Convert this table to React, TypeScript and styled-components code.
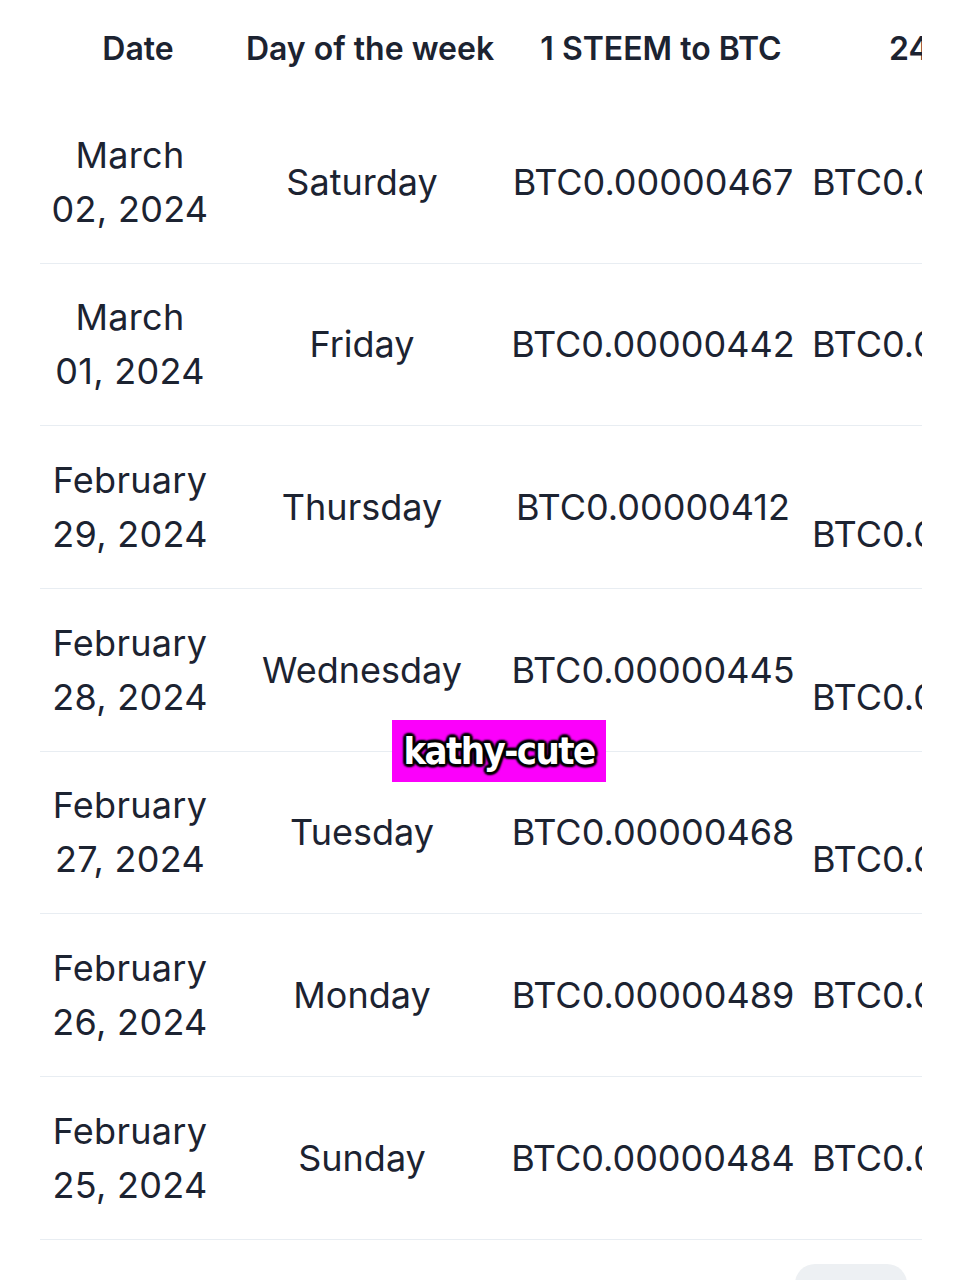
import React from "react";
import styled, { createGlobalStyle } from "styled-components";

const Global = createGlobalStyle`
  html, body { margin: 0; padding: 0; background: #ffffff; }
  body { font-family: Inter, Roboto, sans-serif; color: #1c2331; }
`;

const Page = styled.div`
  position: relative;
  width: 961px;
  height: 1280px;
  overflow: hidden;
  background: #fff;
`;

const TableWrap = styled.div`
  margin-left: 40px;
  width: 882px;
  overflow: hidden;
`;

const Grid = styled.div`
  display: grid;
  grid-template-columns: 180px 284px 298px 300px;
  width: 1062px;
`;

const HeadCell = styled.div<{ $align?: "center" | "left" }>`
  height: 101px;
  box-sizing: border-box;
  display: flex;
  align-items: flex-start;
  justify-content: ${(p) => (p.$align === "left" ? "flex-start" : "center")};
  padding: 28px 0 0 ${(p) => (p.$align === "left" ? "87px" : "16px")};
  font-family: Inter, Roboto, sans-serif;
  font-weight: 600;
  font-size: 32px;
  line-height: 42px;
  color: #1c2331;
  white-space: nowrap;
`;

const Row = styled.div`
  display: contents;
`;

const Cell = styled.div<{ $align?: "center" | "left"; $low?: boolean }>`
  height: 162.67px;
  box-sizing: border-box;
  border-bottom: 1.5px solid #e8edf2;
  display: flex;
  align-items: ${(p) => (p.$low ? "flex-end" : "center")};
  justify-content: ${(p) => (p.$align === "left" ? "flex-start" : "center")};
  padding: ${(p) => (p.$low ? "0 0 27px 10px" : p.$align === "left" ? "0 0 0 10px" : "0")};
  text-align: center;
  font-family: Inter, Roboto, sans-serif;
  font-size: 36px;
  line-height: 54px;
  color: #1c2331;
  white-space: nowrap;
`;

const DateText = styled.div`
  white-space: normal;
  width: 176px;
  text-align: center;
  letter-spacing: 0.3px;
`;

const Footer = styled.div`
  display: flex;
  justify-content: flex-end;
  padding: 24px 54px 0 0;
`;

const Pill = styled.div`
  width: 112px;
  height: 44px;
  border-radius: 20px;
  background: #edf0f3;
`;

const Watermark = styled.div`
  position: absolute;
  left: 392px;
  top: 720px;
  width: 214px;
  height: 62px;
  background: #fb00fb;
  display: flex;
  align-items: center;
  justify-content: center;
  font-family: "DejaVu Sans", sans-serif;
  font-stretch: condensed;
  font-weight: 700;
  font-size: 38px;
  letter-spacing: -1.6px;
  color: #ffffff;
  text-shadow: 0 0 3px #000, 2px 2px 2px #000, -2px -2px 2px #000, 2px -2px 2px #000, -2px 2px 2px #000,
    0 3px 2px #000, 0 -3px 2px #000, 3px 0 2px #000, -3px 0 2px #000;
`;

const rows = [
  { m: "March", d: "02, 2024", day: "Saturday", v: "BTC0.00000467", low: false },
  { m: "March", d: "01, 2024", day: "Friday", v: "BTC0.00000442", low: false },
  { m: "February", d: "29, 2024", day: "Thursday", v: "BTC0.00000412", low: true },
  { m: "February", d: "28, 2024", day: "Wednesday", v: "BTC0.00000445", low: true },
  { m: "February", d: "27, 2024", day: "Tuesday", v: "BTC0.00000468", low: true },
  { m: "February", d: "26, 2024", day: "Monday", v: "BTC0.00000489", low: false },
  { m: "February", d: "25, 2024", day: "Sunday", v: "BTC0.00000484", low: false },
];

export default function App() {
  return (
    <>
      <Global />
      <Page>
        <TableWrap>
          <Grid>
            <HeadCell>Date</HeadCell>
            <HeadCell>Day of the week</HeadCell>
            <HeadCell>1 STEEM to BTC</HeadCell>
            <HeadCell $align="left">24h Change</HeadCell>
            {rows.map((r) => (
              <Row key={r.d + r.m}>
                <Cell>
                  <DateText>
                    {r.m}
                    <br />
                    {r.d}
                  </DateText>
                </Cell>
                <Cell>{r.day}</Cell>
                <Cell>{r.v}</Cell>
                <Cell $align="left" $low={r.low}>
                  BTC0.00000012
                </Cell>
              </Row>
            ))}
          </Grid>
        </TableWrap>
        <Footer>
          <Pill />
        </Footer>
        <Watermark>kathy-cute</Watermark>
      </Page>
    </>
  );
}
